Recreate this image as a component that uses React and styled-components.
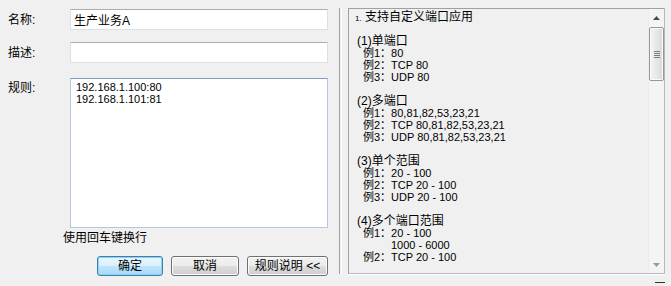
import styled, { createGlobalStyle } from 'styled-components';

const GlobalStyle = createGlobalStyle`
    html, body {
        margin: 0;
        padding: 0;
        background: #f0f0f0;
    }
    body {
        font-family: "Liberation Sans", "Noto Sans CJK SC", sans-serif;
        font-size: 12px;
        color: #000;
    }
`

const Window = styled.div`
    display: flex;
    flex-direction: row;
    align-items: stretch;
    width: 671px;
    height: 286px;
    box-sizing: border-box;
    padding: 8px 0 12px 0;
    background: #f0f0f0;
    overflow: hidden;
`

const FormPane = styled.div`
    width: 339px;
    box-sizing: border-box;
    padding: 1px 0 0 8px;
    display: flex;
    flex-direction: column;
`

const FieldGrid = styled.div`
    display: grid;
    grid-template-columns: 62px 258px;
    row-gap: 12px;
`

const Label = styled.div`
    font-size: 12px;
    line-height: 12px;
    padding-top: ${props => props.$top || 5}px;
    margin-top: ${props => props.$shift || 0}px;
`

const TextInput = styled.input`
    box-sizing: border-box;
    width: 258px;
    height: 21px;
    margin: 0;
    padding: 0 3px;
    border: 1px solid #dbdfe6;
    border-top-color: #abadb3;
    background: #fff;
    font-family: "Liberation Sans", "Noto Sans CJK SC", sans-serif;
    font-size: 12px;
    color: #000;
    outline: none;
`

const RuleBox = styled.textarea`
    box-sizing: border-box;
    width: 258px;
    height: 150px;
    margin: 3px 0 0 0;
    padding: 2px 5px;
    border: 1px solid #b7c8dc;
    border-top-color: #7f9dc0;
    background: #fff;
    font-family: "Liberation Sans", "Noto Sans CJK SC", sans-serif;
    font-size: 11px;
    line-height: 12px;
    color: #000;
    resize: none;
    outline: none;
`

const Hint = styled.div`
    padding-left: 55px;
    margin-top: 4px;
    line-height: 12px;
    font-size: 12px;
`

const ButtonRow = styled.div`
    display: flex;
    justify-content: flex-end;
    gap: 8px;
    width: 320px;
    margin-top: 12px;
`

const Button = styled.button`
    box-sizing: border-box;
    width: ${props => props.$w}px;
    height: 20px;
    margin: 0;
    padding: 0;
    border-radius: 3px;
    border: 1px solid ${props => props.$primary ? '#3c7fb1' : '#707070'};
    background: ${props => props.$primary
        ? 'linear-gradient(#eaf6fd 0%, #d9f0fc 50%, #bee6fd 50%, #a7d9f5 100%)'
        : 'linear-gradient(#f2f2f2 0%, #ebebeb 50%, #dddddd 50%, #cfcfcf 100%)'};
    box-shadow: inset 0 0 0 1px ${props => props.$primary ? '#8ed1f4' : '#fcfcfc'};
    font-family: "Liberation Sans", "Noto Sans CJK SC", sans-serif;
    font-size: 12px;
    line-height: 16px;
    color: #000;
`

const Divider = styled.div`
    width: 1px;
    border-left: 1px solid #a0a0a0;
    border-right: 1px solid #ffffff;
`

const HelpColumn = styled.div`
    flex: 1;
    display: flex;
    flex-direction: column;
    margin: 0 6px 0 6px;
    position: relative;
`

const HelpPanel = styled.div`
    flex: 1;
    display: flex;
    flex-direction: row;
    box-sizing: border-box;
    border: 1px solid #a0a0a0;
    border-right-color: #b9b9b9;
    border-bottom-color: #b9b9b9;
    box-shadow: 0 1px 0 #ffffff;
    background: #f0f0f0;
    overflow: hidden;
`

const HelpText = styled.div`
    flex: 1;
    padding: 2px 0 0 6px;
    font-size: 11px;
    line-height: 12px;
`

const Line = styled.div`
    height: 12px;
    white-space: pre;
    padding-left: ${props => props.$indent || 0}px;
    font-size: ${props => props.$cjk ? 12 : 11}px;
`

const Small = styled.span`
    font-size: 8px;
`

const ScrollBar = styled.div`
    width: 15px;
    display: flex;
    flex-direction: column;
    align-items: center;
    background: #f4f4f4;
    border-left: 1px solid #ececec;
`

const Arrow = styled.div`
    height: 17px;
    width: 15px;
    display: flex;
    align-items: center;
    justify-content: center;
`

const Thumb = styled.div`
    box-sizing: border-box;
    width: 15px;
    height: 54px;
    margin-top: 1px;
    border: 1px solid #979797;
    border-radius: 2px;
    background: linear-gradient(90deg, #f4f4f4 0%, #e8e8e8 50%, #d8d8d8 100%);
    box-shadow: inset 0 0 0 1px #fbfbfb;
    display: flex;
    flex-direction: column;
    align-items: center;
    justify-content: center;
    gap: 1px;
`

const GripLine = styled.div`
    width: 6px;
    height: 1px;
    background: #7a7a7a;
`

const Track = styled.div`
    flex: 1;
`

const Corner = styled.div`
    position: absolute;
    right: 0;
    bottom: -9px;
    width: 10px;
    height: 1px;
    background: #333;
`

const UpIcon = () => (
    <svg width="7" height="4" viewBox="0 0 7 4">
        <path d="M3.5 0 L7 4 L0 4 Z" fill="#4a4a4a" />
    </svg>
)

const DownIcon = () => (
    <svg width="7" height="4" viewBox="0 0 7 4">
        <path d="M0 0 L7 0 L3.5 4 Z" fill="#9a9a9a" />
    </svg>
)

const helpLines = [
    { text: <><Small>1.</Small> 支持自定义端口应用</>, indent: 0, cjk: true },
    { text: '', indent: 0 },
    { text: '(1)单端口', indent: 2, cjk: true },
    { text: '例1：80', indent: 8 },
    { text: '例2：TCP 80', indent: 8 },
    { text: '例3：UDP 80', indent: 8 },
    { text: '', indent: 0 },
    { text: '(2)多端口', indent: 2, cjk: true },
    { text: '例1：80,81,82,53,23,21', indent: 8 },
    { text: '例2：TCP 80,81,82,53,23,21', indent: 8 },
    { text: '例3：UDP 80,81,82,53,23,21', indent: 8 },
    { text: '', indent: 0 },
    { text: '(3)单个范围', indent: 2, cjk: true },
    { text: '例1：20 - 100', indent: 8 },
    { text: '例2：TCP 20 - 100', indent: 8 },
    { text: '例3：UDP 20 - 100', indent: 8 },
    { text: '', indent: 0 },
    { text: '(4)多个端口范围', indent: 2, cjk: true },
    { text: '例1：20 - 100', indent: 8 },
    { text: '1000 - 6000', indent: 36 },
    { text: '例2：TCP 20 - 100', indent: 8 },
]

const App = () => {
    return (
        <>
            <GlobalStyle />
            <Window>
                <FormPane>
                    <FieldGrid>
                        <Label>名称:</Label>
                        <TextInput defaultValue="生产业务A" />
                        <Label>描述:</Label>
                        <TextInput defaultValue="" />
                        <Label $top={4} $shift={3}>规则:</Label>
                        <RuleBox defaultValue={'192.168.1.100:80\n192.168.1.101:81'} />
                    </FieldGrid>
                    <Hint>使用回车键换行</Hint>
                    <ButtonRow>
                        <Button $primary $w={66}>确定</Button>
                        <Button $w={68}>取消</Button>
                        <Button $w={81}>规则说明 &lt;&lt;</Button>
                    </ButtonRow>
                </FormPane>
                <Divider />
                <HelpColumn>
                    <HelpPanel>
                        <HelpText>
                            {helpLines.map((l, i) => (
                                <Line key={i} $indent={l.indent} $cjk={l.cjk}>{l.text}</Line>
                            ))}
                        </HelpText>
                        <ScrollBar>
                            <Arrow><UpIcon /></Arrow>
                            <Thumb>
                                <GripLine />
                                <GripLine />
                                <GripLine />
                                <GripLine />
                            </Thumb>
                            <Track />
                            <Arrow><DownIcon /></Arrow>
                        </ScrollBar>
                    </HelpPanel>
                    <Corner />
                </HelpColumn>
            </Window>
        </>
    )
}

export default App;
